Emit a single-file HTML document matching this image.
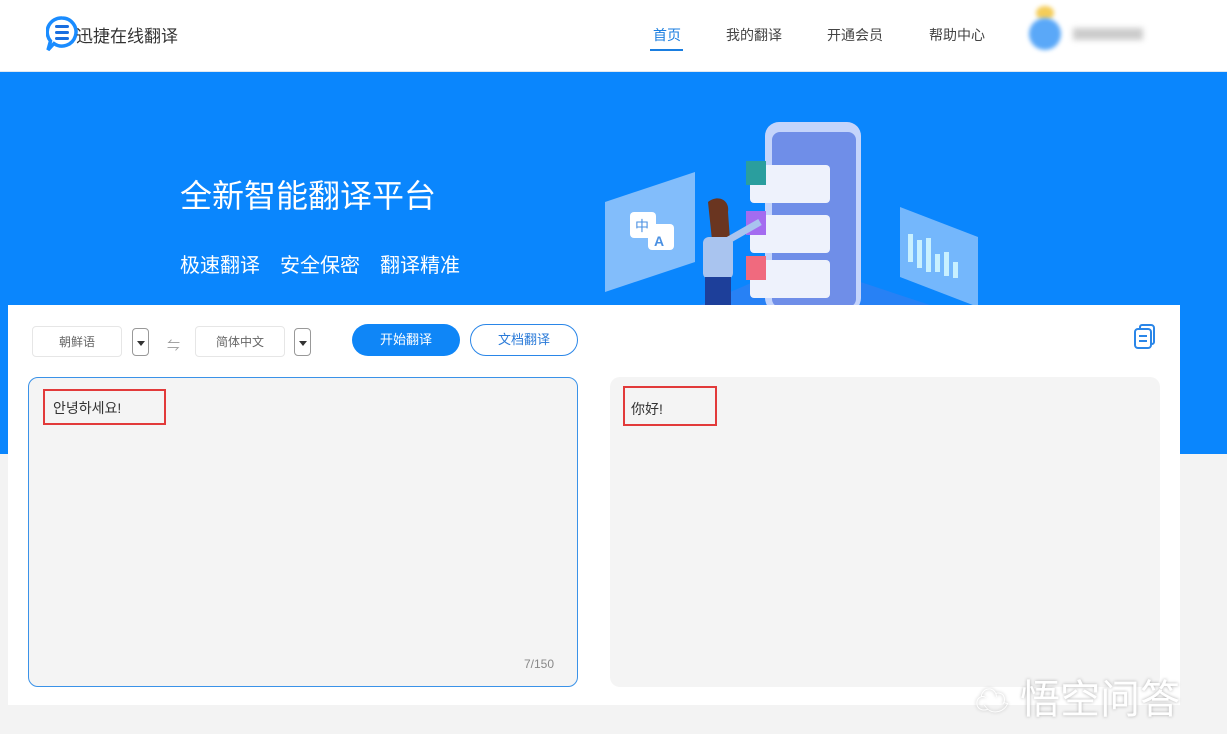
<!DOCTYPE html>
<html><head><meta charset="utf-8"><style>
*{margin:0;padding:0;box-sizing:border-box}
body{width:1227px;height:734px;overflow:hidden;background:#f3f3f3;font-family:"Liberation Sans","Noto Sans CJK SC",sans-serif;position:relative}
.hdr{position:absolute;left:0;top:0;width:1227px;height:72px;background:#fff;border-bottom:1px solid #e0e8f0}
.logo{position:absolute;left:76px;top:22px;font-size:17px;color:#333}
.nav{position:absolute;top:25px;font-size:14px;color:#444}
.blue{position:absolute;left:0;top:72px;width:1227px;height:382px;background:#0a86fd}
.card{position:absolute;left:8px;top:305px;width:1172px;height:400px;background:#fff}
.sel{position:absolute;top:326px;height:31px;border:1px solid #e6e6e6;border-radius:4px;font-size:12px;color:#666;text-align:center;line-height:30px;background:#fff}
.dd{position:absolute;top:328px;width:17px;height:28px;border:1px solid #999;border-radius:4px;background:#fff}
.dd:after{content:"";position:absolute;left:4px;top:12px;border:4px solid transparent;border-top:5px solid #333}
.box{position:absolute;top:377px;height:310px;background:#f4f4f4;border-radius:10px}
</style></head><body>
<div class="hdr">
<svg style="position:absolute;left:46px;top:16px" width="32" height="36" viewBox="0 0 32 36"><path d="M16 2a14 14 0 1 1-8 25.5L2 34l2.5-9A14 14 0 0 1 16 2z" fill="none" stroke="#1a8cff" stroke-width="3.5"/><rect x="9" y="9" width="14" height="3" rx="1.5" fill="#1a6fe0"/><rect x="9" y="15" width="14" height="3" rx="1.5" fill="#1a6fe0"/><rect x="9" y="21" width="14" height="3" rx="1.5" fill="#1a6fe0"/></svg>
<div class="logo">迅捷在线翻译</div>
<div class="nav" style="left:653px;color:#1a7ee0">首页</div>
<div style="position:absolute;left:650px;top:49px;width:33px;height:2px;background:#1a7ee0"></div>
<div class="nav" style="left:726px">我的翻译</div>
<div class="nav" style="left:827px">开通会员</div>
<div class="nav" style="left:929px">帮助中心</div>
<div style="position:absolute;left:1036px;top:6px;width:18px;height:14px;border-radius:50%;background:#f4cd5a;filter:blur(2px)"></div>
<div style="position:absolute;left:1029px;top:18px;width:32px;height:32px;border-radius:50%;background:#5aa8f8;filter:blur(2px)"></div>
<div style="position:absolute;left:1073px;top:28px;width:70px;height:12px;background:#ccc;filter:blur(3px)"></div>
</div>
<div class="blue">
<div style="position:absolute;left:180px;top:99px;font-size:32px;color:#fff">全新智能翻译平台</div>
<div style="position:absolute;left:180px;top:177px;font-size:20px;color:#fff;white-space:nowrap"><span>极速翻译</span><span style="margin-left:20px">安全保密</span><span style="margin-left:20px">翻译精准</span></div>
<svg style="position:absolute;left:600px;top:40px" width="390" height="193" viewBox="0 0 390 193">
<polygon points="5,90 95,60 95,150 5,180" fill="#8fc3fb" opacity=".9"/>
<rect x="30" y="100" width="26" height="26" rx="4" fill="#fff"/><rect x="48" y="112" width="26" height="26" rx="4" fill="#fff"/>
<text x="35" y="119" font-size="14" fill="#4a90e2" font-family="Noto Sans CJK SC">中</text><text x="54" y="134" font-size="14" fill="#4a90e2" font-weight="bold">A</text>
<polygon points="300,95 378,125 378,195 300,165" fill="#8fc3fb" opacity=".8"/>
<g fill="#c8f0ff"><rect x="308" y="122" width="5" height="28"/><rect x="317" y="128" width="5" height="28"/><rect x="326" y="126" width="5" height="34"/><rect x="335" y="142" width="5" height="18"/><rect x="344" y="140" width="5" height="24"/><rect x="353" y="150" width="5" height="16"/></g>
<polygon points="100,193 200,150 330,193" fill="#3b7ef0" opacity=".6"/>
<rect x="165" y="10" width="96" height="190" rx="14" fill="#c4d4fb"/>
<rect x="172" y="20" width="84" height="175" rx="8" fill="#6f8ee8"/>
<g><rect x="150" y="53" width="80" height="38" rx="4" fill="#eef2fc"/><rect x="146" y="49" width="20" height="24" fill="#2a9e9e"/>
<rect x="150" y="103" width="80" height="38" rx="4" fill="#eef2fc"/><rect x="146" y="99" width="20" height="24" fill="#a46cf0"/>
<rect x="150" y="148" width="80" height="38" rx="4" fill="#eef2fc"/><rect x="146" y="144" width="20" height="24" fill="#f06a7e"/></g>
<path d="M108 90c10-8 22-2 20 10l2 28h-18z" fill="#6a3520"/>
<rect x="103" y="125" width="30" height="42" rx="6" fill="#a9c4ef"/>
<path d="M125 130l35-20" stroke="#a9c4ef" stroke-width="7"/>
<rect x="105" y="165" width="26" height="30" fill="#1d3f9a"/>
</svg>
</div>
<div class="card">
<svg style="position:absolute;left:1125px;top:18px" width="24" height="28" viewBox="0 0 24 28"><rect x="2" y="6" width="16" height="19" rx="3" fill="#fff" stroke="#2a86e8" stroke-width="2"/><path d="M7 5V4a2 2 0 0 1 2-2h9a3 3 0 0 1 3 3v14a2 2 0 0 1-2 2" fill="none" stroke="#2a86e8" stroke-width="2"/><path d="M6 13h8M6 18h8" stroke="#2a86e8" stroke-width="2"/></svg>
</div>
<div class="sel" style="left:32px;width:90px">朝鲜语</div>
<div class="dd" style="left:132px"></div>
<div style="position:absolute;left:167px;top:335px;font-size:13px;color:#999">⇋</div>
<div class="sel" style="left:195px;width:90px">简体中文</div>
<div class="dd" style="left:294px"></div>
<div style="position:absolute;left:352px;top:324px;width:108px;height:32px;border-radius:16px;background:#0f86f7;color:#fff;font-size:13px;text-align:center;line-height:32px">开始翻译</div>
<div style="position:absolute;left:470px;top:324px;width:108px;height:32px;border-radius:16px;border:1px solid #2a86e8;color:#2a7ad8;font-size:13px;text-align:center;line-height:30px;background:#fff">文档翻译</div>
<div class="box" style="left:28px;width:550px;border:1px solid #3a92e8"></div>
<div style="position:absolute;left:43px;top:389px;width:123px;height:36px;border:2px solid #e23a3a"></div>
<div style="position:absolute;left:53px;top:398px;font-size:14px;color:#333;font-family:'Liberation Sans','Noto Sans CJK KR',sans-serif">안녕하세요!</div>
<div style="position:absolute;left:524px;top:657px;font-size:12px;color:#888">7/150</div>
<div class="box" style="left:610px;width:550px"></div>
<div style="position:absolute;left:623px;top:386px;width:94px;height:40px;border:2px solid #e23a3a"></div>
<div style="position:absolute;left:631px;top:399px;font-size:14px;color:#333">你好!</div>
<div style="position:absolute;left:975px;top:667px;font-size:40px;color:#fff;white-space:nowrap;text-shadow:0 0 3px #aaa"><span style="font-size:34px">☁</span> 悟空问答</div>
</body></html>
